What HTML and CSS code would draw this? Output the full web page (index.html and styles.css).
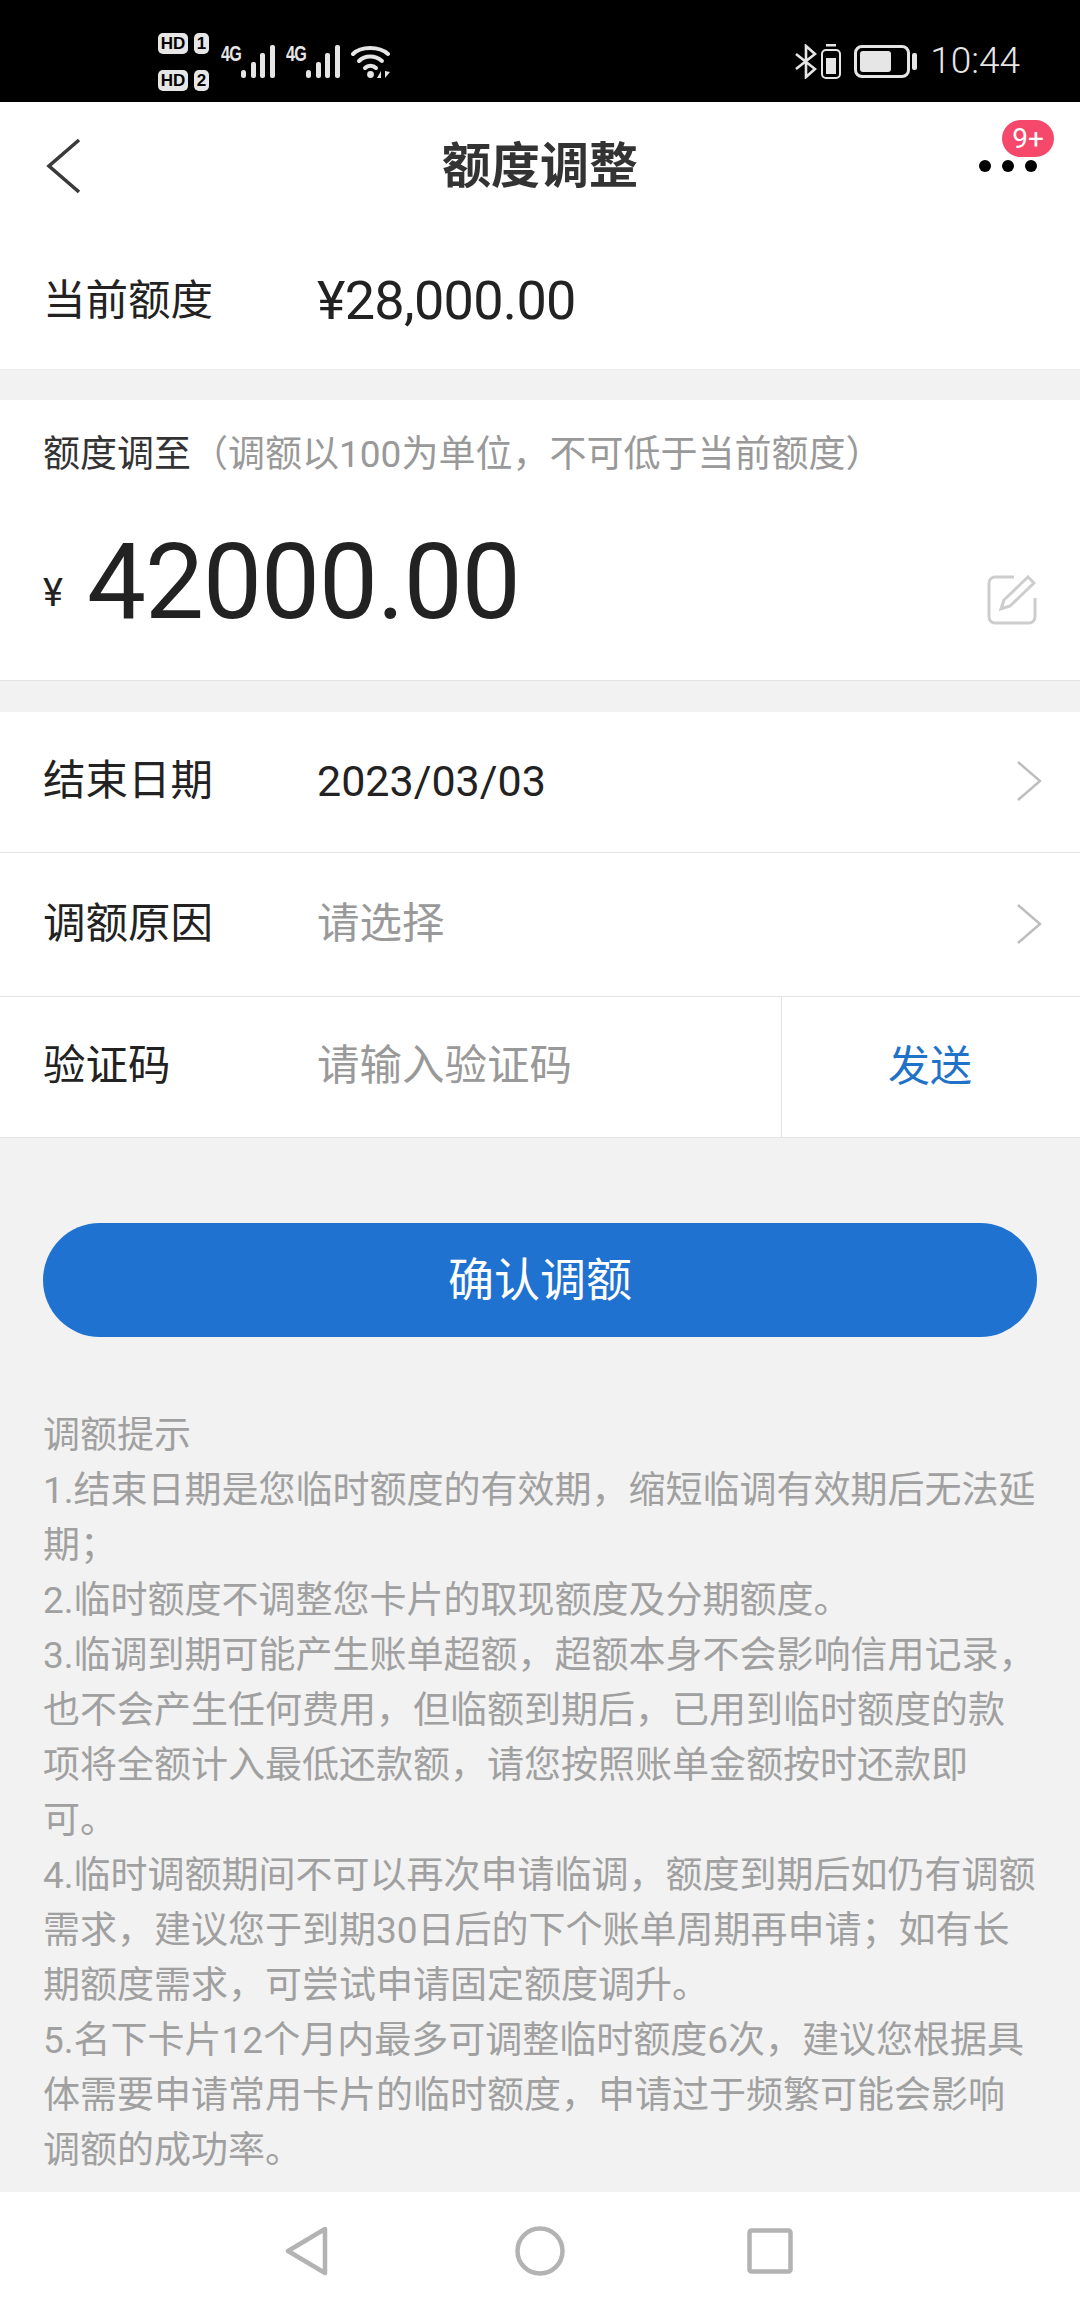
FILE: index.html
```html
<!DOCTYPE html>
<html lang="zh-CN">

<head>
    <meta charset="UTF-8">
    <meta name="viewport" content="width=device-width, initial-scale=1.0">
    <title>额度调整</title>
    <link rel="stylesheet" href="styles.css">
</head>

<body>
    <div id="status-bar">
        <div class="status-left">
            <div class="sim-stack">
                <div class="sim-line"><span class="hd-badge">HD</span><span class="sim-badge">1</span></div>
                <div class="sim-line"><span class="hd-badge">HD</span><span class="sim-badge">2</span></div>
            </div>
            <div class="signal">
                <span class="signal-type">4G</span>
                <svg width="34" height="34" viewBox="0 0 34 34">
                    <g fill="#e6e6e6">
                        <rect x="0" y="25" width="5" height="8" rx="2.5" />
                        <rect x="10" y="17" width="5" height="16" rx="2" />
                        <rect x="19" y="8" width="5" height="25" rx="2" />
                        <rect x="29" y="0" width="5" height="33" rx="2" />
                    </g>
                </svg>
            </div>
            <div class="signal">
                <span class="signal-type">4G</span>
                <svg width="34" height="34" viewBox="0 0 34 34">
                    <g fill="#e6e6e6">
                        <rect x="0" y="25" width="5" height="8" rx="2.5" />
                        <rect x="10" y="17" width="5" height="16" rx="2" />
                        <rect x="19" y="8" width="5" height="25" rx="2" />
                        <rect x="29" y="0" width="5" height="33" rx="2" />
                    </g>
                </svg>
            </div>
            <svg class="wifi" width="40" height="34" viewBox="0 0 40 34">
                <g fill="none" stroke="#e6e6e6" stroke-width="4" stroke-linecap="round">
                    <path d="M2 9 C10 1 28 1 37 9" />
                    <path d="M8 16 C14 10 24 10 31 16" />
                    <path d="M14 23 C17 20 22 20 25 23" />
                </g>
                <circle cx="19.5" cy="29.5" r="3.4" fill="#e6e6e6" />
                <path d="M30 33 V26 L26 33 Z M34 26 V33 L39 27 Z" fill="#e6e6e6" />
            </svg>
        </div>
        <div class="status-right">
            <svg width="22" height="35" viewBox="0 0 22 35">
                <path d="M1 10 L20 25 L11 33 V2 L20 10 L1 25" fill="none" stroke="#e6e6e6" stroke-width="2.6" />
            </svg>
            <svg class="mini-battery" width="20" height="35" viewBox="0 0 20 35">
                <rect x="5" y="0" width="10" height="2.5" fill="#e6e6e6" />
                <rect x="1" y="6" width="18" height="28" rx="4" fill="none" stroke="#e6e6e6" stroke-width="2" />
                <rect x="5" y="14" width="10" height="16" fill="#e6e6e6" />
            </svg>
            <div class="battery">
                <div class="battery-body"><div class="battery-level"></div></div>
                <div class="battery-cap"></div>
            </div>
            <span class="clock">10:44</span>
        </div>
    </div>

    <div id="nav-bar">
        <svg class="nav-back" width="36" height="56" viewBox="0 0 36 56">
            <path d="M33 2 L3 28 L33 54" fill="none" stroke="#3a3a3a" stroke-width="3.6" />
        </svg>
        <div class="nav-title">额度调整</div>
        <div class="nav-more">
            <span class="more-dot"></span><span class="more-dot"></span><span class="more-dot"></span>
            <span class="more-badge">9+</span>
        </div>
    </div>

    <div class="current-row">
        <div class="row-label">当前额度</div>
        <div class="current-amount">¥28,000.00</div>
    </div>

    <div class="amount-card">
        <div class="amount-hint">额度调至<span class="hint-gray">（调额以100为单位，不可低于当前额度）</span></div>
        <div class="amount-line">
            <span class="amount-yen">¥</span>
            <span class="amount-value">42000.00</span>
            <svg class="edit-icon" width="50" height="50" viewBox="0 0 50 50">
                <path d="M27 2 H8 A6 6 0 0 0 2 8 V42 A6 6 0 0 0 8 48 H42 A6 6 0 0 0 48 42 V23" fill="none" stroke="#cdcdcd" stroke-width="3" />
                <path d="M41 2 L47 8 L23 31 L14 34 L17 25 Z" fill="none" stroke="#cdcdcd" stroke-width="3" />
            </svg>
        </div>
    </div>

    <div class="form-card">
        <div class="form-row">
            <div class="row-label">结束日期</div>
            <div class="row-value">2023/03/03</div>
            <svg class="row-arrow" width="26" height="42" viewBox="0 0 26 42">
                <path d="M2 2 L24 21 L2 40" fill="none" stroke="#bdbdbd" stroke-width="2.4" />
            </svg>
        </div>
        <div class="form-row reason-row">
            <div class="row-label">调额原因</div>
            <div class="row-value placeholder">请选择</div>
            <svg class="row-arrow" width="26" height="42" viewBox="0 0 26 42">
                <path d="M2 2 L24 21 L2 40" fill="none" stroke="#bdbdbd" stroke-width="2.4" />
            </svg>
        </div>
        <div class="form-row code-row">
            <div class="row-label">验证码</div>
            <div class="row-value placeholder">请输入验证码</div>
            <div class="send-btn">发送</div>
        </div>
    </div>

    <div id="main-gray">
        <div class="confirm-btn">确认调额</div>
        <div class="tips">
            <p>调额提示</p>
            <p>1.结束日期是您临时额度的有效期，缩短临调有效期后无法延期；</p>
            <p>2.临时额度不调整您卡片的取现额度及分期额度。</p>
            <p>3.临调到期可能产生账单超额，超额本身不会影响信用记录，也不会产生任何费用，但临额到期后，已用到临时额度的款项将全额计入最低还款额，请您按照账单金额按时还款即可。</p>
            <p>4.临时调额期间不可以再次申请临调，额度到期后如仍有调额需求，建议您于到期30日后的下个账单周期再申请；如有长期额度需求，可尝试申请固定额度调升。</p>
            <p>5.名下卡片12个月内最多可调整临时额度6次，建议您根据具体需要申请常用卡片的临时额度，申请过于频繁可能会影响调额的成功率。</p>
        </div>
    </div>

    <div id="bottom-nav">
        <svg width="44" height="50" viewBox="0 0 44 50">
            <path d="M40 3 L3 25 L40 47 Z" fill="none" stroke="#b3b3b3" stroke-width="4.5" stroke-linejoin="round" />
        </svg>
        <svg width="50" height="50" viewBox="0 0 50 50">
            <circle cx="25" cy="25" r="22.5" fill="none" stroke="#b3b3b3" stroke-width="4.5" />
        </svg>
        <svg class="nav-square" width="46" height="46" viewBox="0 0 46 46">
            <rect x="2.5" y="2.5" width="41" height="41" rx="2" fill="none" stroke="#b3b3b3" stroke-width="4.5" />
        </svg>
    </div>
</body>

</html>
```

FILE: styles.css
```css
* {
    box-sizing: border-box;
}

body {
    margin: 0;
    width: 1080px;
    height: 2310px;
    display: flex;
    flex-direction: column;
    background-color: #f2f2f2;
    color: #222;
    font-family: Roboto, "Noto Sans CJK SC", sans-serif;
    overflow: hidden;
}

#status-bar {
    height: 102px;
    flex-shrink: 0;
    background-color: #000;
    color: #e6e6e6;
    display: flex;
    justify-content: space-between;
    align-items: center;
    padding: 0 60px 0 158px;
}

.status-left,
.status-right {
    display: flex;
    align-items: center;
}

.status-left {
    padding-top: 22px;
}

.sim-stack {
    display: flex;
    flex-direction: column;
    gap: 16px;
    margin-right: 12px;
}

.sim-line {
    display: flex;
    gap: 6px;
}

.hd-badge,
.sim-badge {
    height: 21px;
    background-color: #e6e6e6;
    color: #000;
    border-radius: 5px;
    font-family: "Liberation Sans", sans-serif;
    font-size: 17px;
    font-weight: bold;
    line-height: 21px;
    text-align: center;
}

.hd-badge {
    width: 30px;
}

.sim-badge {
    width: 15px;
}

.signal {
    display: flex;
    align-items: flex-start;
    margin-right: 11px;
}

.signal-type {
    width: 20px;
    font-family: "Liberation Sans", sans-serif;
    font-size: 19px;
    font-weight: bold;
    letter-spacing: -1px;
    line-height: 16px;
    transform: scale(0.85, 1.15);
    transform-origin: left top;
}

.status-right {
    padding-top: 20px;
}

.mini-battery {
    margin-left: 4px;
}

.battery {
    display: flex;
    align-items: center;
    margin-left: 13px;
}

.battery-body {
    width: 56px;
    height: 33px;
    border: 3px solid #e6e6e6;
    border-radius: 8px;
    padding: 3px;
}

.battery-level {
    width: 31px;
    height: 100%;
    background-color: #e6e6e6;
    border-radius: 3px;
}

.battery-cap {
    width: 5px;
    height: 17px;
    margin-left: 2px;
    background-color: #e6e6e6;
    border-radius: 2px;
}

.clock {
    margin-left: 13px;
    font-size: 37px;
    font-weight: 300;
    line-height: 36px;
}

#nav-bar {
    height: 132px;
    flex-shrink: 0;
    background-color: #fff;
    display: flex;
    align-items: center;
    justify-content: space-between;
    padding: 0 43px 0 46px;
    position: relative;
}

.nav-back {
    margin-top: -5px;
}

.nav-title {
    position: absolute;
    left: 0;
    right: 0;
    top: 35px;
    text-align: center;
    font-size: 49px;
    line-height: 60px;
    font-weight: bold;
    color: #333;
}

.nav-more {
    display: flex;
    gap: 11px;
    position: relative;
    margin-top: -4px;
}

.more-dot {
    width: 12px;
    height: 12px;
    border-radius: 50%;
    background-color: #000;
}

.more-badge {
    position: absolute;
    right: -17px;
    top: -40px;
    width: 52px;
    height: 37px;
    border-radius: 19px;
    background-color: #f5486a;
    color: #fff;
    font-size: 28px;
    line-height: 37px;
    text-align: center;
}

.current-row {
    height: 136px;
    flex-shrink: 0;
    background-color: #fff;
    display: flex;
    align-items: center;
    padding: 0 43px 2px;
    border-bottom: 1px solid #eee;
}

.row-label {
    width: 274px;
    flex-shrink: 0;
    font-size: 42.5px;
    line-height: 60px;
    color: #222;
}

.current-amount {
    font-size: 54px;
    letter-spacing: -0.7px;
    line-height: 60px;
    color: #222;
}

.amount-card {
    height: 281px;
    flex-shrink: 0;
    margin-top: 30px;
    padding: 29px 43px 0;
    background-color: #fff;
    border-bottom: 1px solid #e4e4e4;
}

.amount-hint {
    font-size: 37px;
    line-height: 52px;
    color: #333;
}

.hint-gray {
    color: #999;
}

.amount-line {
    display: flex;
    align-items: center;
    margin-top: 32px;
}

.amount-yen {
    font-size: 38px;
    margin-right: 24px;
    padding-top: 20px;
}

.amount-value {
    font-size: 105px;
    letter-spacing: -1px;
    line-height: 140px;
    color: #222;
}

.edit-icon {
    margin-left: auto;
    margin-top: 34px;
}

.form-card {
    margin-top: 31px;
    flex-shrink: 0;
    background-color: #fff;
}

.form-row {
    height: 141px;
    display: flex;
    align-items: center;
    padding: 0 38px 2px 43px;
    border-bottom: 1px solid #e4e4e4;
}

.reason-row {
    height: 144px;
}

.row-value {
    font-size: 43px;
    line-height: 60px;
    color: #222;
}

.placeholder {
    font-size: 42.5px;
    color: #999;
}

.row-arrow {
    margin-left: auto;
}

.code-row {
    padding: 0 0 0 43px;
}

.code-row .row-label,
.code-row .row-value {
    margin-bottom: 2px;
}

.send-btn {
    margin-left: auto;
    width: 299px;
    height: 100%;
    border-left: 1px solid #e4e4e4;
    padding: 0 2px 10px 0;
    display: flex;
    align-items: center;
    justify-content: center;
    font-size: 42px;
    color: #1f72c8;
}

#main-gray {
    flex: 1;
    padding: 85px 43px 0;
}

.confirm-btn {
    height: 114px;
    border-radius: 57px;
    padding-bottom: 8px;
    background-color: #1f72d0;
    color: #fff;
    display: flex;
    align-items: center;
    justify-content: center;
    font-size: 46px;
}

.tips {
    margin-top: 71px;
    font-size: 37px;
    line-height: 55px;
    color: #a0a0a0;
}

.tips p {
    margin: 0;
}

#bottom-nav {
    height: 118px;
    flex-shrink: 0;
    background-color: #fff;
    display: flex;
    align-items: center;
    justify-content: center;
    gap: 186px;
    padding-right: 2px;
}

.nav-square {
    margin-left: -4px;
}
```
